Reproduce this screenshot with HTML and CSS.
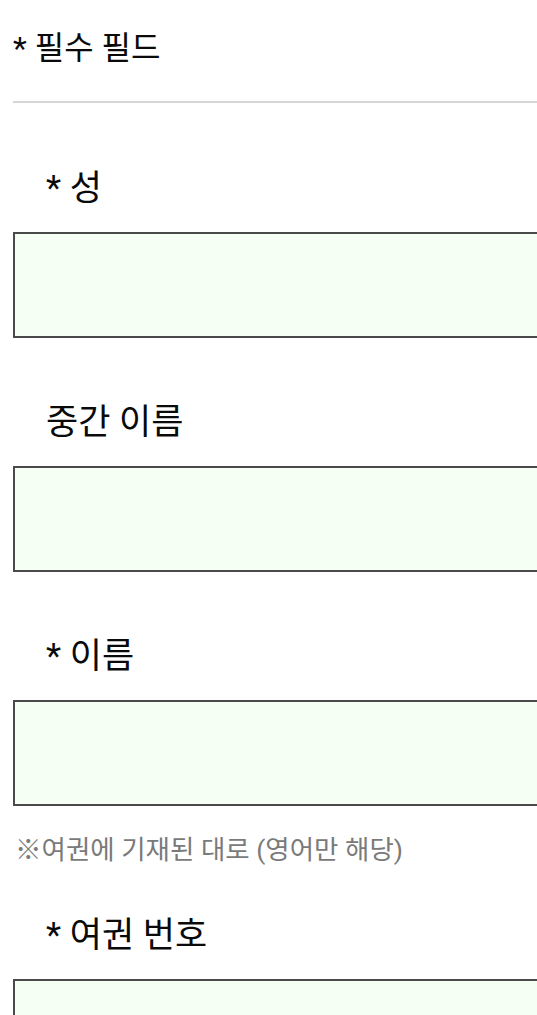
FILE: index.html
```html
<!DOCTYPE html>
<html lang="ko">
<head>
    <meta charset="UTF-8">
    <meta name="viewport" content="width=device-width, initial-scale=1.0">
    <title>여권 정보</title>
    <link rel="stylesheet" href="styles.css">
</head>
<body>
    <div class="page">
        <p class="required-note">* 필수 필드</p>
        <hr class="divider">

        <form class="passport-form">
            <div class="field">
                <label class="field-label" for="lastName">* 성</label>
                <input class="field-input" type="text" id="lastName" name="lastName">
            </div>

            <div class="field">
                <label class="field-label" for="middleName">중간 이름</label>
                <input class="field-input" type="text" id="middleName" name="middleName">
            </div>

            <div class="field field-with-hint">
                <label class="field-label" for="firstName">* 이름</label>
                <input class="field-input" type="text" id="firstName" name="firstName">
                <p class="hint">※여권에 기재된 대로 (영어만 해당)</p>
            </div>

            <div class="field">
                <label class="field-label" for="passportNo">* 여권 번호</label>
                <input class="field-input" type="text" id="passportNo" name="passportNo">
            </div>
        </form>
    </div>
</body>
</html>
```

FILE: styles.css
```css
html, body {
    margin: 0;
    padding: 0;
    background-color: #fff;
    overflow: hidden;
}
body {
    font-family: Roboto, "Noto Sans CJK KR", sans-serif;
    color: #0a0a0a;
}
.page {
    padding: 29px 0 0 13px;
    width: 600px;
}
.required-note {
    margin: 0;
    font-size: 32px;
    line-height: 38px;
}
.divider {
    margin: 34px 0 0 0;
    border: none;
    border-top: 2px solid #d6d6d6;
    height: 0;
}
.passport-form {
    margin-top: 66px;
}
.field {
    margin-bottom: 65px;
}
.field-label {
    display: block;
    margin-left: 33px;
    font-size: 35px;
    line-height: 40px;
}
.field-input {
    display: block;
    box-sizing: border-box;
    width: 100%;
    height: 106px;
    margin-top: 23px;
    border: 2px solid #4a4a4a;
    border-radius: 0;
    background-color: #f6fff3;
    font-size: 28px;
    padding: 0 16px;
}
.field-with-hint {
    margin-bottom: 51px;
}
.hint {
    margin: 29px 0 0 2px;
    font-size: 26.5px;
    line-height: 30px;
    color: #7a7a7a;
}
```
